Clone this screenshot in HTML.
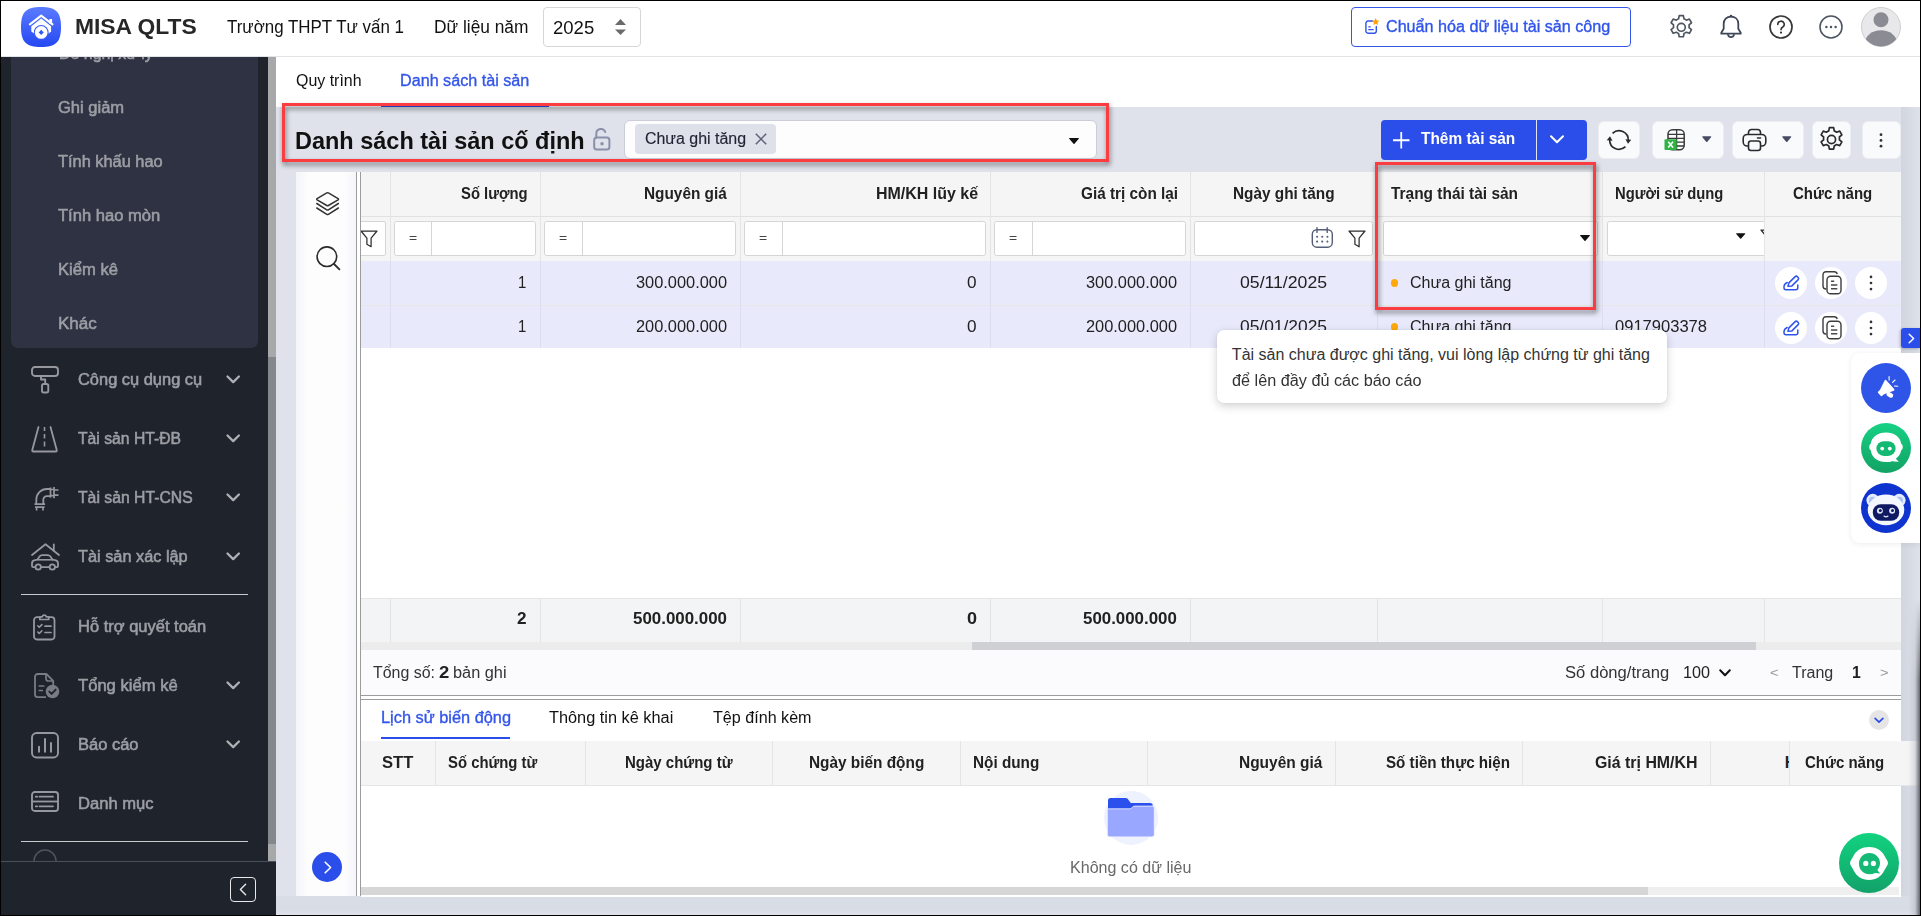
<!DOCTYPE html>
<html><head><meta charset="utf-8"><title>MISA QLTS</title>
<style>
html,body{margin:0;padding:0}
body{width:1921px;height:916px;overflow:hidden;position:relative;background:#dfe2ea;font-family:"Liberation Sans", sans-serif;}
.b{position:absolute;box-sizing:border-box}
.t{position:absolute;white-space:pre;transform-origin:0 50%;display:block}
svg{position:absolute;overflow:visible}
</style></head><body>
<div class="b" style="left:0px;top:0px;width:1921px;height:57px;background:#fff;border-bottom:1px solid #e2e3e6"></div>
<svg style="left:21px;top:7px;" width="40" height="40" viewBox="0 0 40 40"><defs><linearGradient id="lg" x1="0" y1="0" x2="0" y2="1"><stop offset="0" stop-color="#5b7bff"/><stop offset="1" stop-color="#2448f2"/></linearGradient></defs>
<path d="M20 0C34.500 0 40 4.500 40 20C40 35.500 34.500 40 20 40C5.500 40 0 35.500 0 20C0 4.500 5.500 0 20 0Z" fill="url(#lg)"/>
<path d="M8.900 17.300L20.200 8.700l11.300 8.600" fill="none" stroke="#fff" stroke-width="2.100" stroke-linejoin="round" stroke-linecap="round"/>
<rect x="28.300" y="12" width="2.800" height="4.800" fill="#fff"/>
<path d="M10.300 19.200L20.200 11.600l9.900 7.600v5.600L26.600 27H13.800l-3.500-2.600z" fill="#fff"/>
<circle cx="20.200" cy="25.400" r="7.400" fill="#395cf6"/><circle cx="20.200" cy="25.400" r="6.350" fill="#fff"/>
<rect x="18.400" y="23.600" width="3.600" height="3.600" transform="rotate(45 20.200 25.400)" fill="#3558f5"/></svg>
<div class="b" style="left:543px;top:7px;width:98px;height:40px;background:#fff;border:1px solid #d5d6d9;border-radius:4px"></div>
<svg style="left:614.5px;top:19px;" width="11" height="16" viewBox="0 0 11 16"><path d="M5.5 0L11 6H0Z" fill="#6b6b6b"/><path d="M5.5 16L11 10.5H0Z" fill="#6b6b6b"/></svg>
<div class="b" style="left:1351px;top:7px;width:280px;height:40px;background:#fff;border:1px solid #3355e8;border-radius:4px"></div>
<svg style="left:1364px;top:17.5px;" width="15.2" height="17.1" viewBox="0 0 16 18"><path d="M9 3.2H4.2A2.2 2.2 0 0 0 2 5.4v8.4A2.2 2.2 0 0 0 4.2 16h6.6a2.2 2.2 0 0 0 2.200-2.2V9" fill="none" stroke="#3355e8" stroke-width="1.5" stroke-linecap="round"/>
<path d="M5 9.3h1.6M5 12.3h4.6" stroke="#3355e8" stroke-width="1.4" stroke-linecap="round"/>
<path d="M12.300 0l1.2 2.500 2.700.3-2 1.900.5 2.700-2.400-1.300-2.400 1.300.5-2.700-2-1.900 2.700-.3z" fill="#ff9f0a"/></svg>
<svg style="left:1668.7px;top:14.6px;" width="24.6" height="24.6" viewBox="2 2 20 20"><path d="M10.3 2.500h3.400l.5 2.600a7.500 7.500 0 0 1 1.900 1.100l2.500-.9 1.700 3-2 1.700a7.500 7.500 0 0 1 0 2.200l2 1.700-1.700 3-2.500-.9a7.500 7.500 0 0 1-1.900 1.100l-.5 2.600h-3.400l-.5-2.600a7.500 7.500 0 0 1-1.900-1.100l-2.500.9-1.700-3 2-1.700a7.500 7.500 0 0 1 0-2.200l-2-1.700 1.700-3 2.500.9a7.500 7.500 0 0 1 1.900-1.100z" fill="none" stroke="#4d5560" stroke-width="1.35" stroke-linejoin="round"/><circle cx="12" cy="12" r="3.250" fill="none" stroke="#4d5560" stroke-width="1.35"/></svg>
<svg style="left:1719px;top:14px;" width="24" height="26" viewBox="0 0 24 26"><path d="M12 2.600c-4.400 0-7.300 3-7.300 7.200v5L2.300 18.700v1h19.400v-1l-2.400-3.900v-5c0-4.200-2.900-7.200-7.300-7.200z" fill="none" stroke="#3f4756" stroke-width="1.800" stroke-linejoin="round"/><circle cx="12" cy="2.100" r="1.300" fill="#3f4756"/><path d="M9 20.800a3.100 3.100 0 0 0 6 0" fill="none" stroke="#3f4756" stroke-width="1.700" stroke-linecap="round"/></svg>
<svg style="left:1769px;top:15px;" width="24" height="24" viewBox="0 0 24 24"><circle cx="12" cy="12" r="11" fill="none" stroke="#383838" stroke-width="1.700"/><path d="M8.800 9.400a3.200 3.200 0 1 1 4.700 2.800c-1 .6-1.500 1.200-1.500 2.500" fill="none" stroke="#333" stroke-width="1.600" stroke-linecap="round"/><circle cx="12" cy="17.600" r="1.100" fill="#333"/></svg>
<svg style="left:1819px;top:15px;" width="24" height="24" viewBox="0 0 24 24"><circle cx="12" cy="12" r="11" fill="none" stroke="#4d5560" stroke-width="1.600"/><circle cx="7.400" cy="12" r="1.250" fill="#4d5560"/><circle cx="12" cy="12" r="1.250" fill="#4d5560"/><circle cx="16.600" cy="12" r="1.250" fill="#4d5560"/></svg>
<svg style="left:1861px;top:7px;" width="40" height="40" viewBox="0 0 40 40"><defs><clipPath id="av"><circle cx="20" cy="20" r="19.500"/></clipPath></defs><circle cx="20" cy="20" r="19.500" fill="#e8e8ea" stroke="#cfcfd2" stroke-width="1"/><g clip-path="url(#av)"><circle cx="20" cy="12.800" r="7.500" fill="#8a8b93"/><ellipse cx="20" cy="36" rx="16" ry="12.700" fill="#8a8b93"/></g></svg>
<div class="b" style="left:276px;top:57px;width:1645px;height:50px;background:#fff"></div>
<div class="b" style="left:381px;top:105px;width:168px;height:2px;background:#2b4eea"></div>
<div class="b" style="left:1901px;top:107px;width:20px;height:809px;background:linear-gradient(90deg,#d0d5df,#dfe2ea)"></div>
<div class="b" style="left:276px;top:896px;width:1645px;height:20px;background:linear-gradient(180deg,#d9dde5,#d8dce5 70%,#e0e3ea)"></div>
<svg style="left:592.5px;top:127.5px;" width="18" height="23" viewBox="0 0 18 23"><rect x="1.200" y="9.600" width="15.200" height="12" rx="2.600" fill="none" stroke="#8a90aa" stroke-width="2"/><path d="M3.300 9.600V5.600a4.600 4.600 0 0 1 8.900-1.600" fill="none" stroke="#8a90aa" stroke-width="2" stroke-linecap="round"/><circle cx="9" cy="15.800" r="1.700" fill="#8a90aa"/></svg>
<div class="b" style="left:624px;top:120px;width:473px;height:39px;background:#fdfdfe;border:1px solid #cbced8;border-radius:6px"></div>
<div class="b" style="left:635px;top:124px;width:141px;height:30px;background:#dfe1ea;border-radius:4px"></div>
<svg style="left:755px;top:133px;" width="12" height="12" viewBox="0 0 12 12"><path d="M0.800 0.800l10.400 10.400M11.200 0.800L0.800 11.200" stroke="#5b6178" stroke-width="1.500"/></svg>
<svg style="left:1069px;top:138px;" width="10" height="6" viewBox="0 0 10 6"><path d="M0 0.500Q0 0 0.600 0H9.400Q10 0 10 0.500L5.500 5.700Q5 6.200 4.500 5.700Z" fill="#111"/></svg>
<div class="b" style="left:1381px;top:120px;width:206px;height:40px;background:#2b4eea;border-radius:4px"></div>
<div class="b" style="left:1536px;top:120px;width:1px;height:40px;background:#fff;opacity:.85"></div>
<svg style="left:1392.5px;top:131.5px;" width="16.5" height="16.5" viewBox="0 0 16 16"><path d="M8 0v16M0 8h16" stroke="#fff" stroke-width="1.700"/></svg>
<svg style="left:1550px;top:135px;" width="14" height="9" viewBox="0 0 14 9"><path d="M1 1.200l6 6 6-6" fill="none" stroke="#fff" stroke-width="2" stroke-linecap="round" stroke-linejoin="round"/></svg>
<div class="b" style="left:1597.8px;top:120.8px;width:42.4px;height:38.4px;background:#f9fafc;border:1px solid #eceef3;border-radius:6px"></div>
<div class="b" style="left:1652px;top:121px;width:72px;height:38px;background:#f9fafc;border:1px solid #eceef3;border-radius:6px"></div>
<div class="b" style="left:1731.5px;top:121px;width:72px;height:38px;background:#f9fafc;border:1px solid #eceef3;border-radius:6px"></div>
<div class="b" style="left:1811.5px;top:121px;width:39px;height:38px;background:#f9fafc;border:1px solid #eceef3;border-radius:6px"></div>
<div class="b" style="left:1861.5px;top:121px;width:39px;height:38px;background:#f9fafc;border:1px solid #eceef3;border-radius:6px"></div>
<svg style="left:1607.2px;top:127.7px;" width="24" height="24" viewBox="0 0 24 24"><path d="M5.54 5.31A9.3 9.3 0 0 1 21.29 12.32" fill="none" stroke="#2b2b2b" stroke-width="1.7"/><path d="M18.46 18.69A9.3 9.3 0 0 1 2.71 11.68" fill="none" stroke="#2b2b2b" stroke-width="1.7"/><path d="M21.01 15.70L24.27 11.76L18.49 11.26Z" fill="#2b2b2b"/><path d="M2.99 8.30L-0.27 12.24L5.51 12.74Z" fill="#2b2b2b"/></svg>
<svg style="left:1664px;top:129.3px;" width="21" height="21.5" viewBox="0 0 21 21.5"><rect x="4" y="0.700" width="16.200" height="20" rx="4.500" fill="#fdfdfe" stroke="#3a3a3a" stroke-width="1.500"/><path d="M12.600 0.700v20M4 5.400h16.200M4 9.300h16.200M4 13.200h16.200M4 17h16.200" stroke="#3a3a3a" stroke-width="1.300"/><rect x="0.500" y="10.200" width="12.200" height="10.800" rx="0.800" fill="#2fb344"/><path d="M4.200 12.800l4.800 5.800M9 12.800l-4.800 5.800" stroke="#fff" stroke-width="1.600"/></svg>
<svg style="left:1702px;top:136px;" width="9.5" height="6.5" viewBox="0 0 11 7"><path d="M0.300 0.800Q0 0 1 0H10Q11 0 10.700 0.800L6.200 6.400Q5.500 7.200 4.800 6.400Z" fill="#474b63"/></svg>
<svg style="left:1742px;top:128px;" width="25" height="24" viewBox="0 0 25 24"><path d="M6.500 6.500V4.500a3 3 0 0 1 3-3h6a3 3 0 0 1 3 3v2" fill="none" stroke="#2b2b2b" stroke-width="1.600"/><rect x="1.200" y="6.500" width="22.600" height="11.500" rx="4" fill="none" stroke="#2b2b2b" stroke-width="1.600"/><rect x="6.500" y="13" width="12" height="9.500" rx="2.500" fill="#f8f9fc" stroke="#2b2b2b" stroke-width="1.600"/><path d="M15.500 10h3" stroke="#2b2b2b" stroke-width="1.600" stroke-linecap="round"/></svg>
<svg style="left:1782px;top:136px;" width="9.5" height="6.5" viewBox="0 0 11 7"><path d="M0.300 0.800Q0 0 1 0H10Q11 0 10.700 0.800L6.200 6.400Q5.500 7.200 4.800 6.400Z" fill="#474b63"/></svg>
<svg style="left:1818.7px;top:127.3px;" width="25" height="25" viewBox="2 2 20 20"><path d="M10.3 2.500h3.400l.5 2.600a7.500 7.500 0 0 1 1.900 1.100l2.500-.9 1.700 3-2 1.700a7.500 7.500 0 0 1 0 2.200l2 1.700-1.700 3-2.500-.9a7.500 7.500 0 0 1-1.900 1.100l-.5 2.600h-3.400l-.5-2.600a7.500 7.500 0 0 1-1.900-1.100l-2.500.9-1.700-3 2-1.700a7.500 7.500 0 0 1 0-2.200l-2-1.700 1.700-3 2.500.9a7.500 7.500 0 0 1 1.900-1.100z" fill="none" stroke="#2b2b2b" stroke-width="1.35" stroke-linejoin="round"/><circle cx="12" cy="12" r="3.250" fill="none" stroke="#2b2b2b" stroke-width="1.35"/></svg>
<svg style="left:1879.2px;top:132px;" width="4" height="18" viewBox="0 0 4 18"><circle cx="2" cy="2.700" r="1.400" fill="#333"/><circle cx="2" cy="8.400" r="1.400" fill="#333"/><circle cx="2" cy="14.200" r="1.400" fill="#333"/></svg>
<div class="b" style="left:296px;top:172px;width:60px;height:724px;background:linear-gradient(90deg,#f3f5f9 0,#fdfdfe 12px,#fdfdfe 48px,#f5f6fa 100%)"></div>
<div class="b" style="left:356px;top:172px;width:5px;height:724px;background:#fff;border-left:1px solid #9c9c9c;border-right:1px solid #9c9c9c"></div>
<svg style="left:316.1px;top:192px;" width="23.2" height="24.5" viewBox="0 0 23.200 24.500"><path d="M10.800 .900q.800-.500 1.600 0l9.700 5.700q.800.600 0 1.200l-9.700 5.700q-.800.500-1.600 0L1.100 7.800q-.800-.600 0-1.200z" fill="none" stroke="#333" stroke-width="1.500" stroke-linejoin="round"/><path d="M.800 11.500l10 6.300q.800.500 1.600 0l10-6.300" fill="none" stroke="#333" stroke-width="1.500" stroke-linejoin="round" stroke-linecap="round"/><path d="M.800 16l10 6.300q.800.500 1.600 0l10-6.300" fill="none" stroke="#333" stroke-width="1.500" stroke-linejoin="round" stroke-linecap="round"/></svg>
<svg style="left:316px;top:246px;" width="24" height="24" viewBox="0 0 24 24"><circle cx="10.900" cy="10.700" r="9.800" fill="none" stroke="#2b2b2b" stroke-width="1.600"/><path d="M18 18l5.400 5.400" stroke="#2b2b2b" stroke-width="1.800" stroke-linecap="round"/></svg>
<div class="b" style="left:312px;top:852px;width:30px;height:30px;background:#2b4eea;border-radius:50%"></div>
<svg style="left:323.5px;top:861px;" width="8" height="13" viewBox="0 0 8 13"><path d="M1.200 1.200l5.400 5.300-5.400 5.300" fill="none" stroke="#fff" stroke-width="1.600" stroke-linecap="round" stroke-linejoin="round"/></svg>
<div class="b" style="left:361px;top:172px;width:1540px;height:477.5px;background:#fff"></div>
<div class="b" style="left:361px;top:172px;width:1540px;height:44.5px;background:#f5f5f5;border-bottom:1px solid #e0e1e3"></div>
<div class="b" style="left:361px;top:216.5px;width:1540px;height:44.5px;background:#f5f5f5"></div>
<div class="b" style="left:361px;top:261px;width:1540px;height:43.5px;background:#e8eafc"></div>
<div class="b" style="left:361px;top:304.5px;width:1540px;height:1px;background:#e7e7e6"></div>
<div class="b" style="left:361px;top:305.5px;width:1540px;height:42px;background:#e8eafc"></div>
<div class="b" style="left:361px;top:597.5px;width:1540px;height:44px;background:#f3f4f5;border-top:1px solid #e4e5e7"></div>
<div class="b" style="left:390.0px;top:172px;width:1px;height:89px;background:#e3e4e6"></div>
<div class="b" style="left:390.0px;top:261px;width:1px;height:86.5px;background:#dcdeef"></div>
<div class="b" style="left:390.0px;top:598px;width:1px;height:43.5px;background:#e3e4e6"></div>
<div class="b" style="left:540.0px;top:172px;width:1px;height:89px;background:#e3e4e6"></div>
<div class="b" style="left:540.0px;top:261px;width:1px;height:86.5px;background:#dcdeef"></div>
<div class="b" style="left:540.0px;top:598px;width:1px;height:43.5px;background:#e3e4e6"></div>
<div class="b" style="left:740.0px;top:172px;width:1px;height:89px;background:#e3e4e6"></div>
<div class="b" style="left:740.0px;top:261px;width:1px;height:86.5px;background:#dcdeef"></div>
<div class="b" style="left:740.0px;top:598px;width:1px;height:43.5px;background:#e3e4e6"></div>
<div class="b" style="left:990.0px;top:172px;width:1px;height:89px;background:#e3e4e6"></div>
<div class="b" style="left:990.0px;top:261px;width:1px;height:86.5px;background:#dcdeef"></div>
<div class="b" style="left:990.0px;top:598px;width:1px;height:43.5px;background:#e3e4e6"></div>
<div class="b" style="left:1190.0px;top:172px;width:1px;height:89px;background:#e3e4e6"></div>
<div class="b" style="left:1190.0px;top:261px;width:1px;height:86.5px;background:#dcdeef"></div>
<div class="b" style="left:1190.0px;top:598px;width:1px;height:43.5px;background:#e3e4e6"></div>
<div class="b" style="left:1377.0px;top:172px;width:1px;height:89px;background:#e3e4e6"></div>
<div class="b" style="left:1377.0px;top:261px;width:1px;height:86.5px;background:#dcdeef"></div>
<div class="b" style="left:1377.0px;top:598px;width:1px;height:43.5px;background:#e3e4e6"></div>
<div class="b" style="left:1602.0px;top:172px;width:1px;height:89px;background:#e3e4e6"></div>
<div class="b" style="left:1602.0px;top:261px;width:1px;height:86.5px;background:#dcdeef"></div>
<div class="b" style="left:1602.0px;top:598px;width:1px;height:43.5px;background:#e3e4e6"></div>
<div class="b" style="left:1763.75px;top:172px;width:1px;height:89px;background:#e3e4e6"></div>
<div class="b" style="left:1763.75px;top:261px;width:1px;height:86.5px;background:#dcdeef"></div>
<div class="b" style="left:1763.75px;top:598px;width:1px;height:43.5px;background:#e3e4e6"></div>
<div class="b" style="left:361px;top:221px;width:25px;height:35px;background:#fff;border:1px solid #d5d5d7;border-left:none;border-radius:0 2.500px 2.500px 0"></div>
<div class="b" style="left:394px;top:221px;width:142px;height:35px;background:#fff;border:1px solid #d5d5d7;border-radius:2.500px"></div>
<div class="b" style="left:430.5px;top:222px;width:1px;height:33px;background:#d5d5d7"></div>
<div class="b" style="left:544px;top:221px;width:192px;height:35px;background:#fff;border:1px solid #d5d5d7;border-radius:2.500px"></div>
<div class="b" style="left:582.0px;top:222px;width:1px;height:33px;background:#d5d5d7"></div>
<div class="b" style="left:744px;top:221px;width:242px;height:35px;background:#fff;border:1px solid #d5d5d7;border-radius:2.500px"></div>
<div class="b" style="left:782.0px;top:222px;width:1px;height:33px;background:#d5d5d7"></div>
<div class="b" style="left:994px;top:221px;width:192px;height:35px;background:#fff;border:1px solid #d5d5d7;border-radius:2.500px"></div>
<div class="b" style="left:1032.0px;top:222px;width:1px;height:33px;background:#d5d5d7"></div>
<div class="b" style="left:1194px;top:221px;width:178.5px;height:35px;background:#fff;border:1px solid #d5d5d7;border-radius:2.500px"></div>
<div class="b" style="left:1382.5px;top:221px;width:215px;height:35px;background:#fff;border:1px solid #d5d5d7;border-radius:2.500px"></div>
<div class="b" style="left:1607px;top:221px;width:170px;height:35px;background:#fff;border:1px solid #d5d5d7;border-radius:2.500px"></div>
<svg style="left:360.3px;top:229.5px;clip-path:inset(0 0 0 0.700px);overflow:hidden" width="18" height="18" viewBox="0 0 18 18"><path d="M1 1h16l-5.900 7.200v8.600l-4.200-2.600V8.200z" fill="none" stroke="#2e2e2e" stroke-width="1.250" stroke-linejoin="round"/></svg>
<svg style="left:1347.5px;top:229.5px;" width="18" height="18" viewBox="0 0 18 18"><path d="M1 1h16l-5.900 7.200v8.600l-4.200-2.600V8.200z" fill="none" stroke="#2e2e2e" stroke-width="1.250" stroke-linejoin="round"/></svg>
<svg style="left:1760.3px;top:229.3px;" width="18" height="18" viewBox="0 0 18 18"><path d="M1 1h16l-5.900 7.200v8.600l-4.200-2.600V8.200z" fill="none" stroke="#2e2e2e" stroke-width="1.250" stroke-linejoin="round"/></svg>
<svg style="left:1311px;top:227px;" width="22.5" height="21" viewBox="0 0 22.500 21"><rect x="1.300" y="2.700" width="20" height="17.500" rx="4.600" fill="none" stroke="#565d78" stroke-width="1.400"/><path d="M6 0.800v4.600M16.200 0.800v4.600" stroke="#565d78" stroke-width="1.400" stroke-linecap="round"/><g fill="#565d78"><circle cx="6.100" cy="9.800" r="1.050"/><circle cx="11.200" cy="9.800" r="1.050"/><circle cx="16.400" cy="9.800" r="1.050"/><circle cx="6.100" cy="14.600" r="1.050"/><circle cx="11.200" cy="14.600" r="1.050"/><circle cx="16.400" cy="14.600" r="1.050"/></g></svg>
<svg style="left:1579.5px;top:234.5px;" width="10" height="6" viewBox="0 0 10 6"><path d="M0 0.500Q0 0 0.600 0H9.400Q10 0 10 0.500L5.500 5.700Q5 6.200 4.500 5.700Z" fill="#111"/></svg>
<svg style="left:1735.9px;top:232.7px;" width="9.4" height="6" viewBox="0 0 10 6"><path d="M0 0.500Q0 0 0.600 0H9.400Q10 0 10 0.500L5.500 5.700Q5 6.200 4.500 5.700Z" fill="#111"/></svg>
<div class="b" style="left:1764.5px;top:172px;width:136.5px;height:89px;background:#f5f5f5"></div>
<div class="b" style="left:1764.5px;top:216px;width:136.5px;height:1px;background:#e0e1e3"></div>
<div class="b" style="left:1764px;top:172px;width:1px;height:89px;background:#e3e4e6"></div>
<div class="b" style="left:1390.7px;top:279.3px;width:7.5px;height:7.5px;background:#ffa90a;border-radius:50%"></div>
<div class="b" style="left:1390.7px;top:323.3px;width:7.5px;height:7.5px;background:#ffa90a;border-radius:50%"></div>
<div class="b" style="left:1775px;top:266.9px;width:32px;height:32px;background:#fff;border-radius:50%"></div>
<div class="b" style="left:1815px;top:266.9px;width:32px;height:32px;background:#fff;border-radius:50%"></div>
<div class="b" style="left:1855px;top:266.9px;width:32px;height:32px;background:#fff;border-radius:50%"></div>
<svg style="left:1783px;top:274.9px;" width="16" height="16" viewBox="0 0 16 16"><path d="M4.200 7.500C2.300 8.300 1 9.800 1 11.800v1a2 2 0 0 0 2 2h9.800a2 2 0 0 0 2-2V10" fill="none" stroke="#2f54eb" stroke-width="1.500" stroke-linecap="round"/><path d="M5 11.300l.9-3.400 6.300-6.300a1.500 1.500 0 0 1 2.100 0l.9.900a1.500 1.500 0 0 1 0 2.100L8.900 10.900z" fill="none" stroke="#2f54eb" stroke-width="1.500" stroke-linejoin="round"/></svg>
<svg style="left:1821.7px;top:271.09999999999997px;" width="20" height="23.5" viewBox="0 0 20 23.500"><path d="M4.300 18h-.300A3 3 0 0 1 1 15V3.700A3 3 0 0 1 4 .700h8.300a3 3 0 0 1 2.900 2.300" fill="none" stroke="#3d3d3d" stroke-width="1.400"/><rect x="5" y="5.300" width="14" height="17.500" rx="3.600" fill="#fff" stroke="#3d3d3d" stroke-width="1.400"/><path d="M9 10.300h3.200M9 14h6.300M9 17.800h6.300" stroke="#4a4a4a" stroke-width="1.400"/></svg>
<svg style="left:1869.2px;top:274.9px;" width="4" height="16" viewBox="0 0 4 16"><circle cx="2" cy="1.900" r="1.350" fill="#333"/><circle cx="2" cy="8" r="1.350" fill="#333"/><circle cx="2" cy="14.100" r="1.350" fill="#333"/></svg>
<div class="b" style="left:1775px;top:311.9px;width:32px;height:32px;background:#fff;border-radius:50%"></div>
<div class="b" style="left:1815px;top:311.9px;width:32px;height:32px;background:#fff;border-radius:50%"></div>
<div class="b" style="left:1855px;top:311.9px;width:32px;height:32px;background:#fff;border-radius:50%"></div>
<svg style="left:1783px;top:319.9px;" width="16" height="16" viewBox="0 0 16 16"><path d="M4.200 7.500C2.300 8.300 1 9.800 1 11.800v1a2 2 0 0 0 2 2h9.800a2 2 0 0 0 2-2V10" fill="none" stroke="#2f54eb" stroke-width="1.500" stroke-linecap="round"/><path d="M5 11.300l.9-3.400 6.300-6.300a1.500 1.500 0 0 1 2.100 0l.9.900a1.500 1.500 0 0 1 0 2.100L8.900 10.900z" fill="none" stroke="#2f54eb" stroke-width="1.500" stroke-linejoin="round"/></svg>
<svg style="left:1821.7px;top:316.09999999999997px;" width="20" height="23.5" viewBox="0 0 20 23.500"><path d="M4.300 18h-.300A3 3 0 0 1 1 15V3.700A3 3 0 0 1 4 .700h8.300a3 3 0 0 1 2.900 2.300" fill="none" stroke="#3d3d3d" stroke-width="1.400"/><rect x="5" y="5.300" width="14" height="17.500" rx="3.600" fill="#fff" stroke="#3d3d3d" stroke-width="1.400"/><path d="M9 10.300h3.200M9 14h6.300M9 17.800h6.300" stroke="#4a4a4a" stroke-width="1.400"/></svg>
<svg style="left:1869.2px;top:319.9px;" width="4" height="16" viewBox="0 0 4 16"><circle cx="2" cy="1.900" r="1.350" fill="#333"/><circle cx="2" cy="8" r="1.350" fill="#333"/><circle cx="2" cy="14.100" r="1.350" fill="#333"/></svg>
<div class="b" style="left:361px;top:641.5px;width:1540px;height:8px;background:#ececed"></div>
<div class="b" style="left:972px;top:641.5px;width:784px;height:8px;background:#cfd0d3"></div>
<div class="b" style="left:361px;top:649.5px;width:1540px;height:45.5px;background:#fbfbfd"></div>
<svg style="left:1718.5px;top:669px;" width="12" height="8" viewBox="0 0 12 8"><path d="M1.200 1.200l4.800 5 4.800-5" fill="none" stroke="#111" stroke-width="2" stroke-linecap="round" stroke-linejoin="round"/></svg>
<div class="b" style="left:361px;top:695px;width:1540px;height:5px;background:#fff;border-top:1px solid #9c9c9c;border-bottom:1px solid #9c9c9c"></div>
<div class="b" style="left:361px;top:700px;width:1540px;height:197px;background:#fff"></div>
<div class="b" style="left:381px;top:737px;width:129px;height:2.3px;background:#2b4eea"></div>
<div class="b" style="left:361px;top:741px;width:1560px;height:44.5px;background:linear-gradient(90deg,#f5f5f5 0,#f5f5f5 1545px,#e9ebf0 100%);border-bottom:1px solid #e4e5e7"></div>
<div class="b" style="left:435.0px;top:741px;width:1px;height:44px;background:#e3e4e6"></div>
<div class="b" style="left:585.0px;top:741px;width:1px;height:44px;background:#e3e4e6"></div>
<div class="b" style="left:772.0px;top:741px;width:1px;height:44px;background:#e3e4e6"></div>
<div class="b" style="left:960.0px;top:741px;width:1px;height:44px;background:#e3e4e6"></div>
<div class="b" style="left:1147.0px;top:741px;width:1px;height:44px;background:#e3e4e6"></div>
<div class="b" style="left:1335.0px;top:741px;width:1px;height:44px;background:#e3e4e6"></div>
<div class="b" style="left:1522.0px;top:741px;width:1px;height:44px;background:#e3e4e6"></div>
<div class="b" style="left:1710.0px;top:741px;width:1px;height:44px;background:#e3e4e6"></div>
<div class="b" style="left:1789px;top:741px;width:112px;height:44px;background:#f5f5f5;border-left:1px solid #e3e4e6"></div>
<div class="b" style="left:1869px;top:710px;width:20px;height:20px;background:#e5e5e6;border-radius:50%"></div>
<svg style="left:1874px;top:717px;" width="10" height="7" viewBox="0 0 10 7"><path d="M1.100 1.300l3.900 3.900 3.900-3.900" fill="none" stroke="#2b4eea" stroke-width="1.700" stroke-linecap="round" stroke-linejoin="round"/></svg>
<svg style="left:1103.9px;top:791.1px;" width="54.2" height="54" viewBox="0 0 54.200 54"><circle cx="27.100" cy="26.900" r="27" fill="#eef1fe"/><path d="M4 9.400a2.500 2.500 0 0 1 2.500-2.500h15.200q1.300 0 2.100 1l2.400 3.300q.600.900 1.800.900h18.200a2.500 2.500 0 0 1 2.500 2.500V30H4z" fill="#2b50ec"/><path d="M3.300 19.300q0-1.500 1.500-1.500h20.500q1.300 0 2.200-.800l1.300-1.100q.900-.800 2.200-.800h17.300a2 2 0 0 1 2 2v26.300a2.500 2.500 0 0 1-2.500 2.500H5.800a2.500 2.500 0 0 1-2.500-2.500z" fill="#99a8fe" stroke="#f4f6ff" stroke-width=".800"/></svg>
<div class="b" style="left:361px;top:887px;width:1538px;height:7.7px;background:#efefef"></div>
<div class="b" style="left:361px;top:887px;width:1287px;height:7.7px;background:#d6d6d6"></div>
<div class="b" style="left:0px;top:57px;width:268px;height:859px;background:#1f232b"></div>
<div class="b" style="left:11px;top:57px;width:247px;height:290.5px;background:#2f3242;border-radius:0 0 7px 7px"></div>
<div class="b" style="left:58px;top:57px;width:120px;height:8px;overflow:hidden"><span style="position:absolute;left:0.7px;top:-12.6px;font-size:16px;line-height:20px;color:#9c9ea4;white-space:pre;-webkit-text-stroke:0.55px #9c9ea4;transform:scaleX(.995);transform-origin:0 0">Đề nghị xử lý</span></div>
<div class="b" style="left:268px;top:57px;width:8px;height:804px;background:#a7a8aa"></div>
<div class="b" style="left:268px;top:357px;width:8px;height:487px;background:#84878b"></div>
<div class="b" style="left:268px;top:861px;width:8px;height:55px;background:#1f232b"></div>
<div class="b" style="left:21px;top:594px;width:227px;height:1.3px;background:#c9cacd"></div>
<div class="b" style="left:21px;top:841px;width:227px;height:1.3px;background:#c9cacd"></div>
<div class="b" style="left:0px;top:860.5px;width:276px;height:55.5px;background:#1f232b;border-top:1px solid #4b4f58"></div>
<div class="b" style="left:230px;top:876.5px;width:25.5px;height:25.5px;border:1.300px solid #e8e8ea;border-radius:4px"></div>
<svg style="left:238.5px;top:883px;" width="8" height="13" viewBox="0 0 8 13"><path d="M6.600 1.200L1.400 6.500l5.200 5.300" fill="none" stroke="#e8e8ea" stroke-width="1.400" stroke-linecap="round" stroke-linejoin="round"/></svg>
<svg style="left:33px;top:852px;" width="24" height="9" viewBox="0 0 24 9"><path d="M1 9a11 11 0 0 1 22 0" fill="none" stroke="#50535b" stroke-width="1.500"/></svg>
<svg style="left:226px;top:374.5px;" width="14.5" height="9" viewBox="0 0 14.500 9"><path d="M1.500 1.500l5.700 5.600 5.700-5.600" fill="none" stroke="#aeb0b5" stroke-width="2.300" stroke-linecap="round" stroke-linejoin="round"/></svg>
<svg style="left:226px;top:433.5px;" width="14.5" height="9" viewBox="0 0 14.500 9"><path d="M1.500 1.500l5.700 5.600 5.700-5.600" fill="none" stroke="#aeb0b5" stroke-width="2.300" stroke-linecap="round" stroke-linejoin="round"/></svg>
<svg style="left:226px;top:492.5px;" width="14.5" height="9" viewBox="0 0 14.500 9"><path d="M1.500 1.500l5.700 5.600 5.700-5.600" fill="none" stroke="#aeb0b5" stroke-width="2.300" stroke-linecap="round" stroke-linejoin="round"/></svg>
<svg style="left:226px;top:551.5px;" width="14.5" height="9" viewBox="0 0 14.500 9"><path d="M1.500 1.500l5.700 5.600 5.700-5.600" fill="none" stroke="#aeb0b5" stroke-width="2.300" stroke-linecap="round" stroke-linejoin="round"/></svg>
<svg style="left:226px;top:680.8px;" width="14.5" height="9" viewBox="0 0 14.500 9"><path d="M1.500 1.500l5.700 5.600 5.700-5.600" fill="none" stroke="#aeb0b5" stroke-width="2.300" stroke-linecap="round" stroke-linejoin="round"/></svg>
<svg style="left:226px;top:739.5px;" width="14.5" height="9" viewBox="0 0 14.500 9"><path d="M1.500 1.500l5.700 5.600 5.700-5.600" fill="none" stroke="#aeb0b5" stroke-width="2.300" stroke-linecap="round" stroke-linejoin="round"/></svg>
<svg style="left:31px;top:365.5px;" width="28.5" height="28" viewBox="0 0 28.500 28"><rect x="1" y="1" width="26" height="9" rx="3" fill="none" stroke="#96989e" stroke-width="1.900"/><path d="M10 10v3.500h4.200V18" fill="none" stroke="#96989e" stroke-width="1.900" stroke-linejoin="round"/><rect x="11" y="18" width="6.300" height="8.500" rx="1.800" fill="none" stroke="#96989e" stroke-width="1.900"/></svg>
<svg style="left:31px;top:425.5px;" width="27" height="26.5" viewBox="0 0 27 26.500"><path d="M7.500 1L1.200 24.200a1 1 0 0 0 1 1.300h22.600a1 1 0 0 0 1-1.300L19.500 1" fill="none" stroke="#96989e" stroke-width="1.800" stroke-linecap="round" stroke-linejoin="round"/><path d="M13.500 1v4M13.500 8v4.500M13.500 15.500v5" stroke="#96989e" stroke-width="1.600"/></svg>
<svg style="left:33.5px;top:485.5px;" width="25" height="24.5" viewBox="0 0 25 24.500"><path d="M2.300 18V13.500A10.500 10.500 0 0 1 12.800 3h3.700" fill="none" stroke="#96989e" stroke-width="1.800"/><path d="M9.300 18v-4.200A3.700 3.700 0 0 1 13 10.100h3.500" fill="none" stroke="#96989e" stroke-width="1.800"/><path d="M16.500 1.500v10.200M20 1v11.200M16.500 3.500h3.500M16.500 9.700h3.500M20 4h4.500M20 9.200h4.500" fill="none" stroke="#96989e" stroke-width="1.700"/><path d="M0.500 18.200h10.600M1 21.200h9.600M2.600 21.200v3.300M9 21.200v3.300" stroke="#96989e" stroke-width="1.700"/></svg>
<svg style="left:30.5px;top:542.5px;" width="28.5" height="27.5" viewBox="0 0 28.500 27.500"><path d="M1 12L14.500 1.200 28 12" fill="none" stroke="#96989e" stroke-width="1.800" stroke-linecap="round" stroke-linejoin="round"/><path d="M22.800 7.600V1.500" stroke="#96989e" stroke-width="1.800" stroke-linecap="round"/><path d="M3.500 24.200H2.200a1.200 1.200 0 0 1-1.200-1.200v-2.600c0-1.800 1.200-3 3-3.300l2.300-.4 2.400-3.400c.6-.8 1.400-1.200 2.400-1.200h5.600c1 0 1.900.4 2.500 1.200l2.500 3.400 2.300.4c1.800.3 3 1.500 3 3.300V23a1.200 1.200 0 0 1-1.200 1.200h-1.300M10.800 24.200h6.900" fill="none" stroke="#96989e" stroke-width="1.800" stroke-linecap="round" stroke-linejoin="round"/><circle cx="7.200" cy="24" r="2.700" fill="none" stroke="#96989e" stroke-width="1.800"/><circle cx="21.300" cy="24" r="2.700" fill="none" stroke="#96989e" stroke-width="1.800"/><path d="M6.500 16.800h15.500" stroke="#96989e" stroke-width="1.600"/></svg>
<svg style="left:32.5px;top:612.5px;" width="22.5" height="27.5" viewBox="0 0 22.500 27.500"><path d="M6.500 4.200H4a3 3 0 0 0-3 3V23.500a3 3 0 0 0 3 3h14.500a3 3 0 0 0 3-3V7.200a3 3 0 0 0-3-3H16" fill="none" stroke="#96989e" stroke-width="1.800"/><path d="M6.800 6.500V3.800h2.400a2.100 2.100 0 0 1 4.100 0h2.400v2.700z" fill="none" stroke="#96989e" stroke-width="1.700" stroke-linejoin="round"/><path d="M4.800 12.800l1.500 1.500 2.600-2.700M4.800 19l1.500 1.500 2.600-2.700" fill="none" stroke="#96989e" stroke-width="1.600" stroke-linecap="round" stroke-linejoin="round"/><path d="M12 13.200h6M12 19.500h6" stroke="#96989e" stroke-width="1.700" stroke-linecap="round"/></svg>
<svg style="left:33.5px;top:673px;" width="26" height="26" viewBox="0 0 26 26"><path d="M12 24.200H3.600A2.600 2.600 0 0 1 1 21.600V3.600A2.600 2.600 0 0 1 3.600 1h8.800l6.800 6.800v4.500" fill="none" stroke="#7a7c83" stroke-width="1.800" stroke-linejoin="round"/><path d="M12 1v4.500a2.500 2.500 0 0 0 2.500 2.500h4.500" fill="none" stroke="#7a7c83" stroke-width="1.700"/><path d="M5.300 13h4.500M5.300 17.500h3" stroke="#7a7c83" stroke-width="1.700" stroke-linecap="round"/><circle cx="18.500" cy="18.500" r="6.800" fill="#7a7c83"/><path d="M15.300 18.600l2.300 2.300 4.100-4.300" fill="none" stroke="#1f232b" stroke-width="1.900" stroke-linecap="round" stroke-linejoin="round"/></svg>
<svg style="left:31px;top:731.5px;" width="28" height="26.5" viewBox="0 0 28 26.500"><rect x="1" y="1" width="26" height="24.500" rx="4.500" fill="none" stroke="#96989e" stroke-width="1.900"/><path d="M8 19.800v-5M14 19.800V7M20 19.800V11" stroke="#96989e" stroke-width="2.000" stroke-linecap="round"/></svg>
<svg style="left:31px;top:790.5px;" width="28" height="21" viewBox="0 0 28 21"><rect x="1" y="1" width="26" height="19" rx="2.800" fill="none" stroke="#96989e" stroke-width="1.900"/><path d="M1 10.500h26" stroke="#96989e" stroke-width="1.800"/><path d="M4.800 5.700h1.400M8.500 5.700h13.500M4.800 15.300h1.400M8.500 15.300h13.500" stroke="#96989e" stroke-width="1.800" stroke-linecap="round"/></svg>
<span class="t" style="left:75.12px;top:12.50px;font-size:22px;line-height:28px;font-weight:700;color:#272727;transform:scaleX(1.0378);">MISA QLTS</span>
<span class="t" style="left:226.78px;top:16.40px;font-size:18px;line-height:22px;font-weight:400;color:#111;transform:scaleX(0.9397);">Trường THPT Tư vấn 1</span>
<span class="t" style="left:433.78px;top:16.40px;font-size:18px;line-height:22px;font-weight:400;color:#111;transform:scaleX(0.9628);">Dữ liệu năm</span>
<span class="t" style="left:553.28px;top:16.50px;font-size:18px;line-height:22px;font-weight:400;color:#111;transform:scaleX(1.0285);">2025</span>
<span class="t" style="left:1386.36px;top:17.00px;font-size:16px;line-height:20px;font-weight:400;color:#2f54eb;transform:scaleX(1.0084);-webkit-text-stroke:0.35px #2f54eb;">Chuẩn hóa dữ liệu tài sản công</span>
<span class="t" style="left:295.61px;top:71.00px;font-size:16px;line-height:20px;font-weight:400;color:#111;transform:scaleX(0.9957);">Quy trình</span>
<span class="t" style="left:400.36px;top:71.00px;font-size:16px;line-height:20px;font-weight:400;color:#3355e8;transform:scaleX(1.0094);-webkit-text-stroke:0.35px #3355e8;">Danh sách tài sản</span>
<span class="t" style="left:295.04px;top:125.60px;font-size:24px;line-height:30px;font-weight:700;color:#111;transform:scaleX(0.9784);">Danh sách tài sản cố định</span>
<span class="t" style="left:645.11px;top:128.60px;font-size:16px;line-height:20px;font-weight:400;color:#1f2333;transform:scaleX(0.9958);-webkit-text-stroke:0.15px #1f2333;">Chưa ghi tăng</span>
<span class="t" style="left:1421.36px;top:129.30px;font-size:16px;line-height:20px;font-weight:700;color:#fff;transform:scaleX(0.9639);">Thêm tài sản</span>
<span class="t" style="left:461.11px;top:183.80px;font-size:16px;line-height:20px;font-weight:700;color:#212121;transform:scaleX(0.9260);">Số lượng</span>
<span class="t" style="left:644.36px;top:183.80px;font-size:16px;line-height:20px;font-weight:700;color:#212121;transform:scaleX(0.9599);">Nguyên giá</span>
<span class="t" style="left:875.61px;top:183.80px;font-size:16px;line-height:20px;font-weight:700;color:#212121;transform:scaleX(0.9978);">HM/KH lũy kế</span>
<span class="t" style="left:1080.61px;top:183.80px;font-size:16px;line-height:20px;font-weight:700;color:#212121;transform:scaleX(0.9573);">Giá trị còn lại</span>
<span class="t" style="left:1232.86px;top:183.80px;font-size:16px;line-height:20px;font-weight:700;color:#212121;transform:scaleX(0.9598);">Ngày ghi tăng</span>
<span class="t" style="left:1390.61px;top:183.80px;font-size:16px;line-height:20px;font-weight:700;color:#212121;transform:scaleX(0.9653);">Trạng thái tài sản</span>
<span class="t" style="left:1614.86px;top:183.80px;font-size:16px;line-height:20px;font-weight:700;color:#212121;transform:scaleX(0.9239);">Người sử dụng</span>
<span class="t" style="left:1792.86px;top:183.80px;font-size:16px;line-height:20px;font-weight:700;color:#212121;transform:scaleX(0.9384);">Chức năng</span>
<span class="t" style="left:409.17px;top:231.10px;font-size:12px;line-height:15px;font-weight:400;color:#444;transform:scaleX(1.1631);">=</span>
<span class="t" style="left:559.42px;top:231.10px;font-size:12px;line-height:15px;font-weight:400;color:#444;transform:scaleX(1.1631);">=</span>
<span class="t" style="left:759.42px;top:231.10px;font-size:12px;line-height:15px;font-weight:400;color:#444;transform:scaleX(1.1631);">=</span>
<span class="t" style="left:1009.42px;top:231.10px;font-size:12px;line-height:15px;font-weight:400;color:#444;transform:scaleX(1.1631);">=</span>
<span class="t" style="left:517.86px;top:272.50px;font-size:16px;line-height:20px;font-weight:400;color:#212121;transform:scaleX(0.9297);">1</span>
<span class="t" style="left:636.11px;top:272.50px;font-size:16px;line-height:20px;font-weight:400;color:#212121;transform:scaleX(1.0230);">300.000.000</span>
<span class="t" style="left:967.36px;top:272.50px;font-size:16px;line-height:20px;font-weight:400;color:#212121;transform:scaleX(1.0700);">0</span>
<span class="t" style="left:1086.11px;top:272.50px;font-size:16px;line-height:20px;font-weight:400;color:#212121;transform:scaleX(1.0230);">300.000.000</span>
<span class="t" style="left:1240.11px;top:272.50px;font-size:16px;line-height:20px;font-weight:400;color:#212121;transform:scaleX(1.1032);">05/11/2025</span>
<span class="t" style="left:1409.86px;top:272.50px;font-size:16px;line-height:20px;font-weight:400;color:#212121;transform:scaleX(1.0008);">Chưa ghi tăng</span>
<span class="t" style="left:517.86px;top:316.50px;font-size:16px;line-height:20px;font-weight:400;color:#212121;transform:scaleX(0.9297);">1</span>
<span class="t" style="left:636.11px;top:316.50px;font-size:16px;line-height:20px;font-weight:400;color:#212121;transform:scaleX(1.0230);">200.000.000</span>
<span class="t" style="left:967.36px;top:316.50px;font-size:16px;line-height:20px;font-weight:400;color:#212121;transform:scaleX(1.0700);">0</span>
<span class="t" style="left:1086.11px;top:316.50px;font-size:16px;line-height:20px;font-weight:400;color:#212121;transform:scaleX(1.0230);">200.000.000</span>
<span class="t" style="left:1240.11px;top:316.50px;font-size:16px;line-height:20px;font-weight:400;color:#212121;transform:scaleX(1.0868);">05/01/2025</span>
<span class="t" style="left:1409.86px;top:316.50px;font-size:16px;line-height:20px;font-weight:400;color:#212121;transform:scaleX(1.0008);">Chưa ghi tăng</span>
<span class="t" style="left:1615.11px;top:316.50px;font-size:16px;line-height:20px;font-weight:400;color:#212121;transform:scaleX(1.0342);">0917903378</span>
<span class="t" style="left:517.36px;top:608.50px;font-size:16px;line-height:20px;font-weight:700;color:#212121;transform:scaleX(1.0700);">2</span>
<span class="t" style="left:633.11px;top:608.50px;font-size:16px;line-height:20px;font-weight:700;color:#212121;transform:scaleX(1.0567);">500.000.000</span>
<span class="t" style="left:967.36px;top:608.50px;font-size:16px;line-height:20px;font-weight:700;color:#212121;transform:scaleX(1.1262);">0</span>
<span class="t" style="left:1083.36px;top:608.50px;font-size:16px;line-height:20px;font-weight:700;color:#212121;transform:scaleX(1.0539);">500.000.000</span>
<span class="t" style="left:373.11px;top:663.20px;font-size:16px;line-height:20px;font-weight:400;color:#333;transform:scaleX(0.9962);">Tổng số:</span>
<span class="t" style="left:439.36px;top:663.20px;font-size:16px;line-height:20px;font-weight:700;color:#212121;transform:scaleX(1.1542);">2</span>
<span class="t" style="left:452.86px;top:663.20px;font-size:16px;line-height:20px;font-weight:400;color:#333;transform:scaleX(1.0196);">bản ghi</span>
<span class="t" style="left:1565.36px;top:663.20px;font-size:16px;line-height:20px;font-weight:400;color:#333;transform:scaleX(1.0373);">Số dòng/trang</span>
<span class="t" style="left:1683.36px;top:663.20px;font-size:16px;line-height:20px;font-weight:400;color:#212121;transform:scaleX(1.0122);">100</span>
<span class="t" style="left:1770.48px;top:665.20px;font-size:13px;line-height:16px;font-weight:400;color:#9a9a9a;transform:scaleX(1.1246);">&lt;</span>
<span class="t" style="left:1791.61px;top:663.20px;font-size:16px;line-height:20px;font-weight:400;color:#333;transform:scaleX(1.0019);">Trang</span>
<span class="t" style="left:1851.61px;top:663.20px;font-size:16px;line-height:20px;font-weight:700;color:#212121;transform:scaleX(0.9858);">1</span>
<span class="t" style="left:1879.73px;top:665.20px;font-size:13px;line-height:16px;font-weight:400;color:#9a9a9a;transform:scaleX(1.1246);">&gt;</span>
<span class="t" style="left:380.61px;top:707.80px;font-size:16px;line-height:20px;font-weight:400;color:#3355e8;transform:scaleX(1.0218);-webkit-text-stroke:0.35px #3355e8;">Lịch sử biến động</span>
<span class="t" style="left:549.36px;top:707.80px;font-size:16px;line-height:20px;font-weight:400;color:#111;transform:scaleX(1.0199);">Thông tin kê khai</span>
<span class="t" style="left:712.61px;top:707.80px;font-size:16px;line-height:20px;font-weight:400;color:#111;transform:scaleX(1.0072);">Tệp đính kèm</span>
<span class="t" style="left:381.86px;top:753.00px;font-size:16px;line-height:20px;font-weight:700;color:#212121;transform:scaleX(1.0351);">STT</span>
<span class="t" style="left:447.61px;top:753.00px;font-size:16px;line-height:20px;font-weight:700;color:#212121;transform:scaleX(0.9294);">Số chứng từ</span>
<span class="t" style="left:625.11px;top:753.00px;font-size:16px;line-height:20px;font-weight:700;color:#212121;transform:scaleX(0.9372);">Ngày chứng từ</span>
<span class="t" style="left:808.61px;top:753.00px;font-size:16px;line-height:20px;font-weight:700;color:#212121;transform:scaleX(0.9607);">Ngày biến động</span>
<span class="t" style="left:972.61px;top:753.00px;font-size:16px;line-height:20px;font-weight:700;color:#212121;transform:scaleX(0.9562);">Nội dung</span>
<span class="t" style="left:1239.06px;top:753.00px;font-size:16px;line-height:20px;font-weight:700;color:#212121;transform:scaleX(0.9669);">Nguyên giá</span>
<span class="t" style="left:1385.66px;top:753.00px;font-size:16px;line-height:20px;font-weight:700;color:#212121;transform:scaleX(0.9486);">Số tiền thực hiện</span>
<span class="t" style="left:1595.36px;top:753.00px;font-size:16px;line-height:20px;font-weight:700;color:#212121;transform:scaleX(0.9942);">Giá trị HM/KH</span>
<span class="t" style="left:1805.36px;top:753.00px;font-size:16px;line-height:20px;font-weight:700;color:#212121;transform:scaleX(0.9384);">Chức năng</span>
<span class="t" style="left:1070.16px;top:858.20px;font-size:16px;line-height:20px;font-weight:400;color:#686868;transform:scaleX(1.0030);">Không có dữ liệu</span>
<span class="t" style="left:58.06px;top:98.40px;font-size:16px;line-height:20px;font-weight:400;color:#9c9ea4;transform:scaleX(1.0320);-webkit-text-stroke:0.55px #9c9ea4;">Ghi giảm</span>
<span class="t" style="left:58.06px;top:152.40px;font-size:16px;line-height:20px;font-weight:400;color:#9c9ea4;transform:scaleX(1.0223);-webkit-text-stroke:0.55px #9c9ea4;">Tính khấu hao</span>
<span class="t" style="left:58.06px;top:206.40px;font-size:16px;line-height:20px;font-weight:400;color:#9c9ea4;transform:scaleX(1.0349);-webkit-text-stroke:0.55px #9c9ea4;">Tính hao mòn</span>
<span class="t" style="left:58.06px;top:260.40px;font-size:16px;line-height:20px;font-weight:400;color:#9c9ea4;transform:scaleX(1.0378);-webkit-text-stroke:0.55px #9c9ea4;">Kiểm kê</span>
<span class="t" style="left:58.06px;top:314.40px;font-size:16px;line-height:20px;font-weight:400;color:#9c9ea4;transform:scaleX(1.0634);-webkit-text-stroke:0.55px #9c9ea4;">Khác</span>
<span class="t" style="left:77.96px;top:370.20px;font-size:16px;line-height:20px;font-weight:400;color:#9c9ea4;transform:scaleX(1.0264);-webkit-text-stroke:0.55px #9c9ea4;">Công cụ dụng cụ</span>
<span class="t" style="left:77.96px;top:429.20px;font-size:16px;line-height:20px;font-weight:400;color:#9c9ea4;transform:scaleX(0.9824);-webkit-text-stroke:0.55px #9c9ea4;">Tài sản HT-ĐB</span>
<span class="t" style="left:77.96px;top:488.20px;font-size:16px;line-height:20px;font-weight:400;color:#9c9ea4;transform:scaleX(0.9846);-webkit-text-stroke:0.55px #9c9ea4;">Tài sản HT-CNS</span>
<span class="t" style="left:77.96px;top:547.20px;font-size:16px;line-height:20px;font-weight:400;color:#9c9ea4;transform:scaleX(1.0192);-webkit-text-stroke:0.55px #9c9ea4;">Tài sản xác lập</span>
<span class="t" style="left:77.96px;top:616.70px;font-size:16px;line-height:20px;font-weight:400;color:#9c9ea4;transform:scaleX(1.0309);-webkit-text-stroke:0.55px #9c9ea4;">Hỗ trợ quyết toán</span>
<span class="t" style="left:77.96px;top:675.70px;font-size:16px;line-height:20px;font-weight:400;color:#9c9ea4;transform:scaleX(1.0378);-webkit-text-stroke:0.55px #9c9ea4;">Tổng kiểm kê</span>
<span class="t" style="left:78.11px;top:735.20px;font-size:16px;line-height:20px;font-weight:400;color:#9c9ea4;transform:scaleX(1.0308);-webkit-text-stroke:0.55px #9c9ea4;">Báo cáo</span>
<span class="t" style="left:78.11px;top:794.20px;font-size:16px;line-height:20px;font-weight:400;color:#9c9ea4;transform:scaleX(1.0358);-webkit-text-stroke:0.55px #9c9ea4;">Danh mục</span>
<div class="b" style="left:1784px;top:752px;width:5px;height:22px;overflow:hidden"><span style="position:absolute;left:0.7px;top:1px;font-size:16px;line-height:20px;font-weight:700;color:#212121">H</span></div>
<div class="b" style="left:1901px;top:328px;width:19px;height:20px;background:#2b4eea;border-radius:3px 0 0 3px;box-shadow:-1px 1px 3px rgba(0,0,0,.25)"></div>
<svg style="left:1907.5px;top:332.5px;" width="7" height="11" viewBox="0 0 7 11"><path d="M1.200 1.200l4.400 4.300-4.400 4.300" fill="none" stroke="#fff" stroke-width="1.500" stroke-linecap="round" stroke-linejoin="round"/></svg>
<div class="b" style="left:1851px;top:353.2px;width:69px;height:190px;background:#fff;border-radius:9px 0 0 9px;box-shadow:0 1px 6px rgba(0,0,0,.08)"></div>
<div class="b" style="left:1861px;top:362.9px;width:50px;height:50px;background:#2f54e8;border-radius:50%"></div>
<svg style="left:1873px;top:374.5px;" width="26" height="26" viewBox="0 0 26 26"><g transform="translate(13.5 13) rotate(-42)"><path d="M-7.200-2.600L3.600-6.800a1 1 0 0 1 1.400.900v11.800a1 1 0 0 1-1.400.900L-7.200 2.600z" fill="#fff"/><rect x="-9.600" y="-3" width="3.400" height="6" rx="1.200" fill="#fff"/><rect x="-4.500" y="3.800" width="4.600" height="7" rx="2.300" fill="#fff" transform="rotate(-20 -2 7)"/><path d="M7.300-4.200l2.300-2.600M8.300-.200h3.400M7.300 3.800l2.300 2.400" stroke="#fff" stroke-width="1.100" stroke-linecap="round"/></g></svg>
<svg style="left:1861px;top:422.9px;" width="50" height="50" viewBox="0 0 50 50"><defs><linearGradient id="gg" x1="0" y1="0" x2="0" y2="1"><stop offset="0" stop-color="#16d183"/><stop offset="1" stop-color="#12a264"/></linearGradient></defs><circle cx="25" cy="25" r="25" fill="url(#gg)"/><path d="M25 9.400c8.200 0 14.300 4.300 15.200 11.300 1 .500 1.600 1.600 1.600 3.300s-.600 2.800-1.600 3.300c-.500 3.600-2.500 6.500-5.400 8.400l3.100 3.100-5.300-.300-.600-.600c-2.100.800-4.500 1.200-7 1.200-8.200 0-14.300-4.400-15.200-11.800-1-.500-1.600-1.600-1.600-3.300s.600-2.800 1.600-3.300C10.700 13.700 16.800 9.400 25 9.400z" fill="#fff"/><rect x="15.400" y="18.200" width="19.200" height="14.800" rx="7.400" fill="#13b873"/><circle cx="21.200" cy="25.600" r="1.900" fill="#fff"/><circle cx="28.800" cy="25.600" r="1.900" fill="#fff"/></svg>
<svg style="left:1861px;top:482.9px;" width="50" height="50" viewBox="0 0 50 50"><circle cx="25" cy="25" r="25" fill="#0e33cf"/><circle cx="11.800" cy="17.200" r="6.400" fill="#e4ecfc"/><circle cx="38.200" cy="17.200" r="6.400" fill="#e4ecfc"/><circle cx="11.600" cy="17.400" r="3.600" fill="#a9c2f2"/><circle cx="38.400" cy="17.400" r="3.600" fill="#a9c2f2"/><ellipse cx="25" cy="26.800" rx="18.300" ry="15.400" fill="#f4f7fe"/><rect x="11.800" y="21.200" width="26.400" height="16.600" rx="8" fill="#101a63"/><circle cx="18.900" cy="27.800" r="3" fill="#dfe5f5"/><circle cx="31.100" cy="27.800" r="3" fill="#dfe5f5"/><circle cx="19.300" cy="27.600" r="1.500" fill="#101a63"/><circle cx="31.500" cy="27.600" r="1.500" fill="#101a63"/><path d="M23 33q2 1.700 4 0" fill="none" stroke="#e8ecf8" stroke-width="1.100" stroke-linecap="round"/></svg>
<svg style="left:1839px;top:833px;" width="60" height="60" viewBox="0 0 60 60"><defs><linearGradient id="gg2" x1="0" y1="0" x2="0" y2="1"><stop offset="0" stop-color="#12d27f"/><stop offset="1" stop-color="#12a26a"/></linearGradient></defs><circle cx="30" cy="30" r="30" fill="url(#gg2)"/><path d="M30 14c7 0 12.500 3.200 15.300 8.400l3.300 5.800q.800 1.800 0 3.600l-3.300 5.800C42.500 43.400 37 47 30 47s-12.500-3.600-15.300-9.400l-3.300-5.800q-.800-1.800 0-3.600l3.300-5.800C17.500 17.200 23 14 30 14z" fill="#fff"/><path d="M30.500 20c5.900 0 10.500 4.400 10.500 10.100 0 2.700-1 5.100-2.700 6.900l2.900 3.500-5-.500c-1.700.800-3.600 1.200-5.700 1.200-5.900 0-10.500-4.500-10.500-10.500S24.600 20 30.500 20z" fill="#14b975"/><circle cx="26.800" cy="30.400" r="2.600" fill="#fff"/><circle cx="34.400" cy="30.400" r="2.600" fill="#fff"/></svg>
<div class="b" style="left:282px;top:103px;width:827px;height:59px;border:3px solid #fb3c41;filter:drop-shadow(1.5px 3px 2.5px rgba(0,0,0,.5))"></div>
<div class="b" style="left:1375px;top:162px;width:221px;height:148px;border:3px solid #fb3c41;filter:drop-shadow(1.5px 3px 2.5px rgba(0,0,0,.5))"></div>
<div class="b" style="left:1217px;top:330px;width:450px;height:72.5px;background:#fff;border-radius:7px;box-shadow:0 3px 10px rgba(0,0,0,.18),0 0 2px rgba(0,0,0,.08)"></div>
<span class="t" style="left:1231.86px;top:345.30px;font-size:16px;line-height:20px;font-weight:400;color:#333;transform:scaleX(1.0000);">Tài sản chưa được ghi tăng, vui lòng lập chứng từ ghi tăng</span>
<span class="t" style="left:1231.86px;top:371.30px;font-size:16px;line-height:20px;font-weight:400;color:#333;transform:scaleX(1.0145);">để lên đầy đủ các báo cáo</span>
<div class="b" style="left:1909px;top:600px;width:11px;height:316px;background:linear-gradient(90deg,rgba(70,72,80,0),rgba(70,72,80,.12) 55%,rgba(70,72,80,.8));-webkit-mask-image:linear-gradient(180deg,transparent,#000 80px)"></div>
<div class="b" style="left:0px;top:0px;width:1921px;height:1px;background:#000"></div>
<div class="b" style="left:0px;top:0px;width:1px;height:916px;background:#000"></div>
<div class="b" style="left:1920px;top:0px;width:1px;height:916px;background:#000"></div>
<div class="b" style="left:0px;top:915px;width:1921px;height:1px;background:#000"></div>
</body></html>
